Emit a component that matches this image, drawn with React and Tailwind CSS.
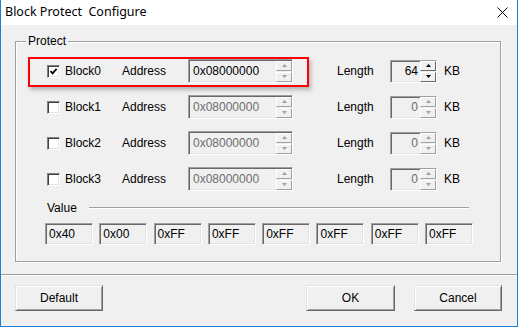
import React from "react";

const FONT = { fontFamily: '"Liberation Sans", Arial, sans-serif' };

function Arrow({ up, color }) {
  return (
    <svg width="5" height="3" viewBox="0 0 5 3">
      {up ? <polygon points="0,3 5,3 2.5,0" fill={color} /> : <polygon points="0,0 5,0 2.5,3" fill={color} />}
    </svg>
  );
}

function Spinner({ enabled, h = "h-[21px]" }) {
  const color = enabled ? "#000" : "#a0a0a0";
  const half = enabled
    ? "flex-1 flex items-center justify-center bg-[#f0f0f0] border-t border-l border-t-white border-l-white border-b border-r border-b-[#696969] border-r-[#696969]"
    : "flex-1 flex items-center justify-center bg-[#f0f0f0] border-t border-l border-t-white border-l-white border-b border-r border-b-[#a0a0a0] border-r-[#a0a0a0]";
  return (
    <div className={`flex flex-col w-[16px] ${h} gap-[1px]`}>
      <div className={half}>
        <Arrow up color={color} />
      </div>
      <div className={half}>
        <Arrow color={color} />
      </div>
    </div>
  );
}

const sunken =
  "border border-t-[#a0a0a0] border-l-[#a0a0a0] border-b-white border-r-white shadow-[inset_1px_1px_0_#696969,inset_-1px_-1px_0_#e3e3e3] bg-[#f0f0f0]";

function Checkbox({ checked }) {
  return (
    <div className="w-[13px] h-[13px] bg-white border border-t-[#808080] border-l-[#808080] border-b-white border-r-white shadow-[inset_1px_1px_0_#404040,inset_-1px_-1px_0_#e3e3e3] flex items-center justify-center shrink-0">
      {checked && (
        <svg width="9" height="9" viewBox="0 0 9 9">
          <path d="M1.5 4.2 L3.6 6.4 L7.6 1.8" stroke="#000" strokeWidth="1.8" fill="none" />
        </svg>
      )}
    </div>
  );
}

function Row({ idx, enabled }) {
  return (
    <div className="h-[36px] flex items-center pl-[31px] text-[12px] text-black" style={FONT}>
      <Checkbox checked={enabled} />
      <span className="ml-[5px] w-[57px]">Block{idx}</span>
      <span className="w-[66px]">Address</span>
      <div className={`w-[105px] h-[24px] flex items-center ${sunken}`}>
        <span className={`pl-[4px] ${enabled ? "text-black" : "text-[#6d6d6d]"}`}>0x08000000</span>
        <div className="ml-auto mr-[0px]">
          <Spinner enabled={false} />
        </div>
      </div>
      <span className="ml-[44px] w-[53px]">Length</span>
      <div className={`w-[47px] h-[23px] flex items-center ${sunken}`}>
        <span className={`flex-1 text-right pr-[2px] ${enabled ? "text-black" : "text-[#6d6d6d]"}`}>
          {enabled ? "64" : "0"}
        </span>
        <Spinner enabled={enabled} />
      </div>
      <span className="ml-[7px]">KB</span>
    </div>
  );
}

function Button({ children, w }) {
  return (
    <div
      className={`${w} h-[26px] flex items-center justify-center bg-[#f0f0f0] border border-t-[#e3e3e3] border-l-[#e3e3e3] border-b-[#696969] border-r-[#696969] shadow-[inset_1px_1px_0_#ffffff,inset_-1px_-1px_0_#a0a0a0] text-[12px] text-black`}
      style={FONT}
    >
      {children}
    </div>
  );
}

export default function App() {
  const values = ["0x40", "0x00", "0xFF", "0xFF", "0xFF", "0xFF", "0xFF", "0xFF"];
  return (
    <div className="w-[518px] h-[327px] flex flex-col bg-[#f0f0f0] border-x border-b border-[#1e7ed3] overflow-hidden">
      {/* Title bar */}
      <div className="h-[25px] bg-white flex items-center shrink-0 pl-[4px] pr-[9px]">
        <span
          className="text-[12.5px] text-black whitespace-pre"
          style={{ fontFamily: '"Noto Sans", "Open Sans", sans-serif' }}
        >
          Block Protect  Configure
        </span>
        <svg className="ml-auto" width="11" height="11" viewBox="0 0 11 11">
          <path d="M0.5 0.5 L10.5 10.5 M10.5 0.5 L0.5 10.5" stroke="#000" strokeWidth="1" />
        </svg>
      </div>

      {/* Group box */}
      <div className="relative ml-[14px] mt-[16px] w-[486px] h-[221px] border border-[#a0a0a0] shadow-[1px_1px_0_#ffffff,inset_1px_1px_0_#ffffff]">
        <span
          className="absolute left-[10px] top-[-9px] px-[2px] bg-[#f0f0f0] text-[12px] text-black leading-[16px]"
          style={FONT}
        >
          Protect
        </span>
        <div className="pt-[11px] flex flex-col">
          <Row idx={0} enabled />
          <Row idx={1} />
          <Row idx={2} />
          <Row idx={3} />
        </div>
        <div className="mt-[3px] h-[16px] flex items-center pl-[31px]">
          <span className="text-[12px] text-black" style={FONT}>
            Value
          </span>
          <div className="ml-[12px] w-[380px] h-[2px] border-t border-t-[#a0a0a0] border-b border-b-white" />
        </div>
        <div className="mt-[7px] flex pl-[29px] gap-[6.3px]">
          {values.map((v, i) => (
            <div key={i} className={`w-[48px] h-[22px] flex items-center ${sunken}`}>
              <span className="pl-[3px] text-[12px] text-black" style={FONT}>
                {v}
              </span>
            </div>
          ))}
        </div>
        {/* annotation */}
        <div className="absolute left-[12px] top-[15px] w-[281px] h-[30px] border-2 border-[#f00] shadow-[2px_3px_4px_rgba(0,0,0,0.25)]" />
      </div>

      {/* separator */}
      <div className="mt-[12px] h-[2px] border-t border-t-[#a0a0a0] border-b border-b-white" />

      {/* buttons */}
      <div className="mt-[9px] flex items-center pl-[14px]">
        <Button w="w-[88px]">Default</Button>
        <div className="ml-auto flex gap-[19px] pr-[15px]">
          <Button w="w-[89px]">OK</Button>
          <Button w="w-[88px]">Cancel</Button>
        </div>
      </div>
    </div>
  );
}
